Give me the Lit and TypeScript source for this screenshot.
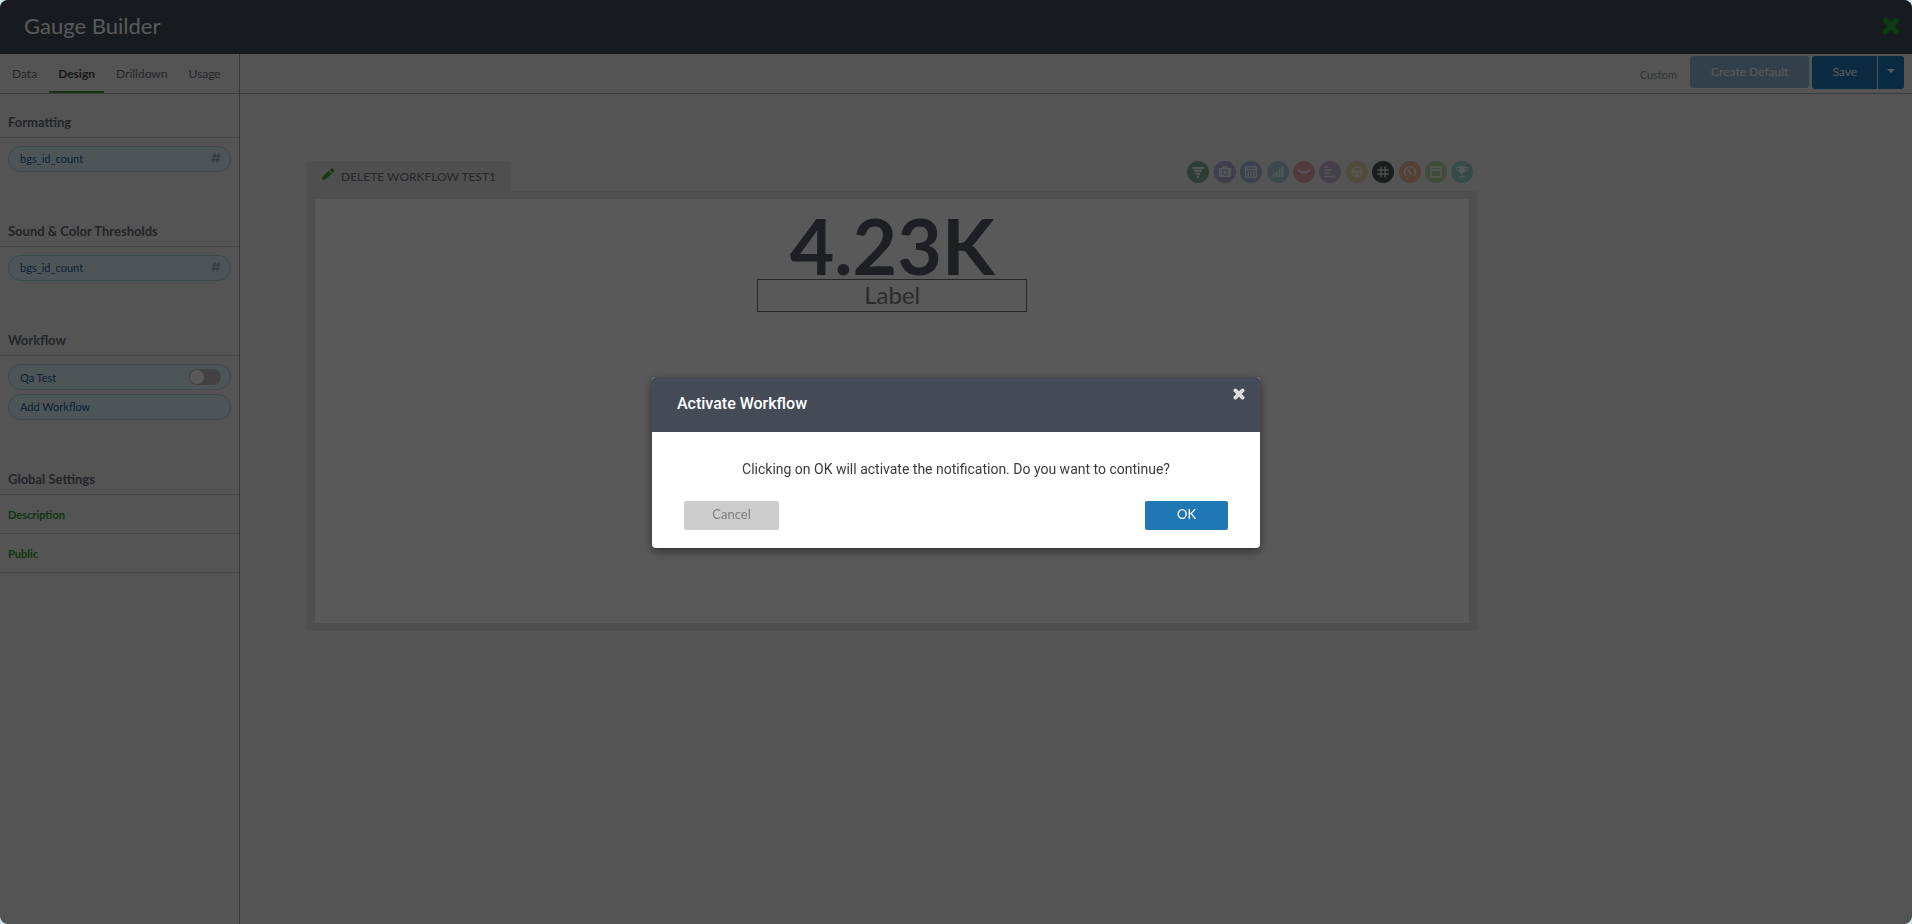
import { LitElement, html, svg, css } from "lit";
import { customElement, property, state } from "lit/decorators.js";
import { classMap } from "lit/directives/class-map.js";

const base = css`
  *,
  *::before,
  *::after {
    box-sizing: border-box;
  }
  button,
  input {
    font: inherit;
    color: inherit;
    margin: 0;
    padding: 0;
    border: 0;
    background: none;
  }
  button {
    cursor: pointer;
  }
  h1,
  h2,
  p {
    margin: 0;
  }
  svg {
    display: block;
  }
`;

const crossIcon = (size: number) => svg`
  <svg width=${size} height=${size} viewBox="0 0 16 16" aria-hidden="true">
    <path d="M3.2 3.2l9.6 9.6M12.8 3.2l-9.6 9.6" stroke="currentColor" stroke-width="5" stroke-linecap="round" />
  </svg>`;

const hashIcon = svg`
  <svg width="10" height="10" viewBox="0 0 10 10" aria-hidden="true">
    <path d="M3.9 .5l-1.5 9M7.6 .5l-1.5 9M1.2 3.2h8.3M.5 6.8h8.3" fill="none" stroke="currentColor" stroke-width="1.6" />
  </svg>`;

interface GaugeType {
  name: string;
  color: string;
  glyph: unknown;
}

const gaugeTypes: GaugeType[] = [
  {
    name: "Funnel",
    color: "#1c7048",
    glyph: svg`<path d="M5 6h12l-1 2.2H6zM6.9 9h8.2l-.9 2.1H7.8zM8.4 12h5.2l-.8 1.9H9.2zM9.6 14.8h2.8l-.9 2.7h-1z" fill="currentColor"/>`,
  },
  {
    name: "Camera",
    color: "#7579c4",
    glyph: svg`<path d="M5 7h3l1-2h4l1 2h3v9H5z" fill="currentColor"/><circle cx="11" cy="11.3" r="2.6" fill="none" stroke="#7579c4" stroke-width="1.3"/>`,
  },
  {
    name: "Table",
    color: "#5c80c4",
    glyph: svg`<path d="M5.7 5.7h10.6v10.6H5.7zM5.7 8.5h10.6M8.4 10v5M11 10v5M13.7 10v5" fill="none" stroke="currentColor" stroke-width="1.4"/>`,
  },
  {
    name: "Bar chart",
    color: "#62b6cc",
    glyph: svg`<path d="M6.5 16v-3M9.5 16v-5M12.5 16V8M15.5 16V5.5" stroke="currentColor" stroke-width="1.8"/>`,
  },
  {
    name: "Trend",
    color: "#e06464",
    glyph: svg`<path d="M6 9.5l3.3 2.2L11 11l1.8.8L16 9.5" fill="none" stroke="currentColor" stroke-width="1.6"/><circle cx="6" cy="9.5" r="1.2" fill="currentColor"/><circle cx="9.4" cy="11.7" r="1.4" fill="currentColor"/><circle cx="12.7" cy="11.7" r="1.4" fill="currentColor"/><circle cx="16" cy="9.5" r="1.2" fill="currentColor"/>`,
  },
  {
    name: "Timeline",
    color: "#9c7ab8",
    glyph: svg`<path d="M5.5 6h4M5.5 9h7M5.5 12.4h5M5.5 15.5h11" stroke="currentColor" stroke-width="1.6"/>`,
  },
  {
    name: "Wheel",
    color: "#dcc85c",
    glyph: svg`<circle cx="11" cy="11" r="4.8" fill="none" stroke="currentColor" stroke-width="1.4"/><path d="M6.5 10.5h9M11 11v4.5" stroke="currentColor" stroke-width="1.8"/>`,
  },
  {
    name: "Number",
    color: "#48544f",
    glyph: svg`<path d="M8.9 5.5v11M13.1 5.5v11M5.2 9h11.6M5.2 13h11.6" fill="none" stroke="#e0e0e0" stroke-width="1.4"/>`,
  },
  {
    name: "Gauge",
    color: "#e8883c",
    glyph: svg`<path d="M7 15a5.5 5.5 0 1 1 8 0M11.5 12L9 8.6" fill="none" stroke="currentColor" stroke-width="1.6"/><circle cx="11.500" cy="12" r="1.3" fill="currentColor"/>`,
  },
  {
    name: "Window",
    color: "#7fc35c",
    glyph: svg`<path d="M6 6h10v10H6zM6 9h10" fill="none" stroke="currentColor" stroke-width="1.4"/>`,
  },
  {
    name: "Trophy",
    color: "#3cc8a8",
    glyph: svg`<path d="M7.8 5h6.4v3.5q0 3.5-3.2 4-3.2-.5-3.2-4zM10.4 12h1.2v3h-1.2zM8.3 15h5.4v1.5H8.3z" fill="currentColor"/><path d="M8 6.500H5.2q0 3.5 3.4 3.7M14 6.500h2.8q0 3.5-3.4 3.7" fill="none" stroke="currentColor"/>`,
  },
];

@customElement("side-panel")
export class SidePanel extends LitElement {
  @state() private workflowOn = false;

  static styles = [
    base,
    css`
      :host {
        display: block;
        border-right: 1px solid #9c9ea2;
        font-size: 12px;
        color: #6b727c;
      }
      .tabs {
        display: flex;
        gap: 3px;
        height: 40px;
        padding-left: 3px;
        border-bottom: 1px solid #a8a8aa;
      }
      .tab {
        padding: 0 9px;
        line-height: 39px;
      }
      .tab.active {
        color: #3c424c;
        font-weight: 700;
        line-height: 35px;
        border-top: 1px solid transparent;
        border-bottom: 2px solid #3f9f36;
      }
      .heading {
        height: 44px;
        padding: 18px 8px 0;
        border-bottom: 1px solid #c8c8ca;
        color: #666b74;
        font-size: 13px;
        line-height: 20px;
        font-weight: 700;
      }
      .items {
        display: grid;
        gap: 4px;
        padding: 8px 8px 31px;
      }
      .pill {
        display: flex;
        align-items: center;
        justify-content: space-between;
        width: 100%;
        height: 26px;
        padding: 0 9px 2px 11px;
        border: 1px solid #b4d4de;
        border-radius: 13px;
        background: #dff3f9;
        color: #245f92;
        font-size: 11px;
        text-align: left;
      }
      .toggle {
        padding-bottom: 0;
      }
      .hash {
        color: #a2a8b8;
      }
      .switch {
        appearance: none;
        display: flex;
        align-items: center;
        width: 32px;
        height: 16px;
        padding: 0 1px;
        border-radius: 8px;
        background: #bebebe;
        cursor: pointer;
      }
      .switch::before {
        content: "";
        width: 14px;
        height: 14px;
        border-radius: 7px;
        background: #fff;
      }
      .switch:checked {
        justify-content: flex-end;
        background: #48bc3c;
      }
      .setting {
        display: block;
        width: 100%;
        height: 39px;
        padding: 0 8px;
        border-bottom: 1px solid #c8c8ca;
        color: #319a31;
        font-size: 11px;
        font-weight: 700;
        text-align: left;
      }
    `,
  ];

  render() {
    const tabs = ["Data", "Design", "Drilldown", "Usage"];
    return html`
      <nav class="tabs" role="tablist">
        ${tabs.map(
          (t) => html`<button
            role="tab"
            aria-selected=${t === "Design"}
            class=${classMap({ tab: true, active: t === "Design" })}
          >
            ${t}
          </button>`
        )}
      </nav>
      ${["Formatting", "Sound & Color Thresholds"].map(
        (title) => html`
          <h2 class="heading">${title}</h2>
          <div class="items">
            <button class="pill">bgs_id_count <span class="hash">${hashIcon}</span></button>
          </div>
        `
      )}
      <h2 class="heading">Workflow</h2>
      <div class="items">
        <label class="pill toggle">
          Qa Test
          <input
            class="switch"
            type="checkbox"
            .checked=${this.workflowOn}
            @change=${(e: Event) => (this.workflowOn = (e.target as HTMLInputElement).checked)}
          />
        </label>
        <button class="pill">Add Workflow</button>
      </div>
      <h2 class="heading">Global Settings</h2>
      <button class="setting">Description</button>
      <button class="setting">Public</button>
    `;
  }
}

@customElement("gauge-card")
export class GaugeCard extends LitElement {
  static styles = [
    base,
    css`
      :host {
        display: block;
      }
      .top {
        display: flex;
        align-items: flex-start;
        justify-content: space-between;
        height: 30px;
      }
      .name {
        display: flex;
        align-items: center;
        gap: 6px;
        height: 30px;
        padding: 0 15px 0 14px;
        border-radius: 4px 4px 0 0;
        background: #e2e2e2;
        color: #6a707a;
        font-size: 12px;
      }
      .pencil {
        margin-bottom: 4px;
        color: #2fa52f;
      }
      .types {
        display: flex;
        justify-content: space-between;
        width: 286px;
        margin-right: 4px;
      }
      .type {
        width: 22px;
        height: 22px;
        border-radius: 11px;
        color: #fff;
        opacity: 0.5;
      }
      .type.active {
        opacity: 1;
      }
      .frame {
        border: 8px solid #e2e2e2;
        height: 440px;
        background: #fff;
        display: flex;
        flex-direction: column;
        align-items: center;
        padding-top: 12px;
        color: #565a66;
      }
      .value {
        font-size: 77px;
        line-height: 68px;
        font-weight: 700;
      }
      .label {
        width: 270px;
        height: 33px;
        padding-bottom: 2px;
        border: 1px solid #6c6c6c;
        color: #7c7c7e;
        font-size: 24px;
        text-align: center;
      }
    `,
  ];

  render() {
    return html`
      <div class="top">
        <div class="name">
          <svg class="pencil" width="14" height="13" viewBox="0 0 14 13" aria-hidden="true">
            <path
              d="M1 12l.8-3.500L7.800 2.900l2.800 2.800-6 5.500zM8.700 2.100l1.500-1.400q.7-.6 1.400 0l1.400 1.400q.6.7 0 1.400l-1.500 1.400z"
              fill="currentColor"
            />
          </svg>
          <span>DELETE WORKFLOW TEST1</span>
        </div>
        <div class="types">
          ${gaugeTypes.map(
            (g) => html`<button
              class=${classMap({ type: true, active: g.name === "Number" })}
              style="background:${g.color}"
              aria-label=${g.name}
            >
              <svg width="22" height="22" viewBox="0 0 22 22">${g.glyph}</svg>
            </button>`
          )}
        </div>
      </div>
      <div class="frame">
        <div class="value">4.23K</div>
        <input class="label" aria-label="Gauge label" value="Label" />
      </div>
    `;
  }
}

@customElement("confirm-dialog")
export class ConfirmDialog extends LitElement {
  @property() heading = "";
  @property() message = "";

  static styles = [
    base,
    css`
      :host {
        position: fixed;
        inset: 0;
        display: flex;
        align-items: center;
        justify-content: center;
        border-radius: 8px;
        background: rgba(0, 0, 0, 0.65);
      }
      .dialog {
        width: 608px;
        border-radius: 4px;
        overflow: hidden;
        background: #fff;
        box-shadow: 0 3px 10px rgba(0, 0, 0, 0.5);
        font-family: Roboto, sans-serif;
      }
      .header {
        display: flex;
        align-items: flex-start;
        justify-content: space-between;
        height: 55px;
        padding: 11px 15px 0 25px;
        background: #444b57;
        color: #fff;
      }
      .title {
        padding-top: 6px;
        font-size: 16px;
        line-height: 20px;
        font-weight: 500;
      }
      .close {
        color: #dcdcdc;
      }
      .message {
        padding: 26px 32px 21px;
        color: #3c3c3c;
        font-size: 14px;
        line-height: 22px;
        text-align: center;
      }
      .actions {
        display: flex;
        justify-content: space-between;
        padding: 0 32px 18px;
        font-family: Lato, sans-serif;
        font-size: 13px;
      }
      .action {
        min-width: 95px;
        height: 29px;
        padding-bottom: 2px;
        border-radius: 2px;
        background: #ccc;
        color: #7e7e7e;
      }
      .action.primary {
        min-width: 83px;
        background: #1f78b4;
        color: #fff;
      }
    `,
  ];

  render() {
    return html`
      <div class="dialog" role="dialog" aria-modal="true" aria-labelledby="title">
        <div class="header">
          <h2 class="title" id="title">${this.heading}</h2>
          <button class="close" aria-label="Close">${crossIcon(12)}</button>
        </div>
        <p class="message">${this.message}</p>
        <div class="actions">
          <button class="action">Cancel</button>
          <button class="action primary">OK</button>
        </div>
      </div>
    `;
  }
}

@customElement("app-root")
export class AppRoot extends LitElement {
  static styles = [
    base,
    css`
      :host {
        display: block;
        min-height: 100vh;
        background: #cfe8ee;
        font-family: Lato, sans-serif;
      }
      .window {
        display: flex;
        flex-direction: column;
        min-height: 100vh;
        border-radius: 8px;
        overflow: hidden;
        background: #f0f0f0;
      }
      .titlebar {
        display: flex;
        align-items: center;
        justify-content: space-between;
        height: 54px;
        padding: 0 12px 3px 24px;
        background: #444b57;
        color: #fff;
      }
      .title {
        font-size: 22px;
        font-weight: 400;
      }
      .close {
        color: #1faa3e;
      }
      .body {
        flex: 1;
        display: grid;
        grid-template-columns: 240px 1fr;
      }
      .toolbar {
        display: flex;
        justify-content: flex-end;
        height: 40px;
        padding: 2px 8px 0 0;
        border-bottom: 1px solid #a8a8aa;
        color: #fff;
        font-size: 12px;
      }
      .status {
        padding-right: 13px;
        color: #8f9896;
        font-size: 11px;
        line-height: 38px;
      }
      .default {
        height: 32px;
        margin-right: 3px;
        padding: 0 21px 2px;
        border-radius: 3px;
        background: #90b8d8;
      }
      .save {
        height: 33px;
        padding: 0 20px 2px;
        border-radius: 3px 0 0 3px;
        background: #207cc0;
      }
      .more {
        display: grid;
        place-items: center;
        width: 26px;
        height: 33px;
        margin-left: 1px;
        padding-bottom: 4px;
        border-radius: 0 3px 3px 0;
        background: #207cc0;
      }
      .stage {
        padding-top: 67px;
      }
      .card {
        width: 70%;
        margin-left: 67px;
      }
    `,
  ];

  render() {
    return html`
      <div class="window">
        <header class="titlebar">
          <h1 class="title">Gauge Builder</h1>
          <button class="close" aria-label="Close builder">${crossIcon(18)}</button>
        </header>
        <div class="body">
          <side-panel></side-panel>
          <main>
            <div class="toolbar">
              <span class="status">Custom</span>
              <button class="default">Create Default</button>
              <button class="save">Save</button>
              <button class="more" aria-label="More save options">
                <svg width="8" height="4" viewBox="0 0 8 4"><path d="M0 0h8L4 4z" fill="currentColor" /></svg>
              </button>
            </div>
            <div class="stage">
              <gauge-card class="card"></gauge-card>
            </div>
          </main>
        </div>
      </div>
      <confirm-dialog
        heading="Activate Workflow"
        message="Clicking on OK will activate the notification. Do you want to continue?"
      ></confirm-dialog>
    `;
  }
}
